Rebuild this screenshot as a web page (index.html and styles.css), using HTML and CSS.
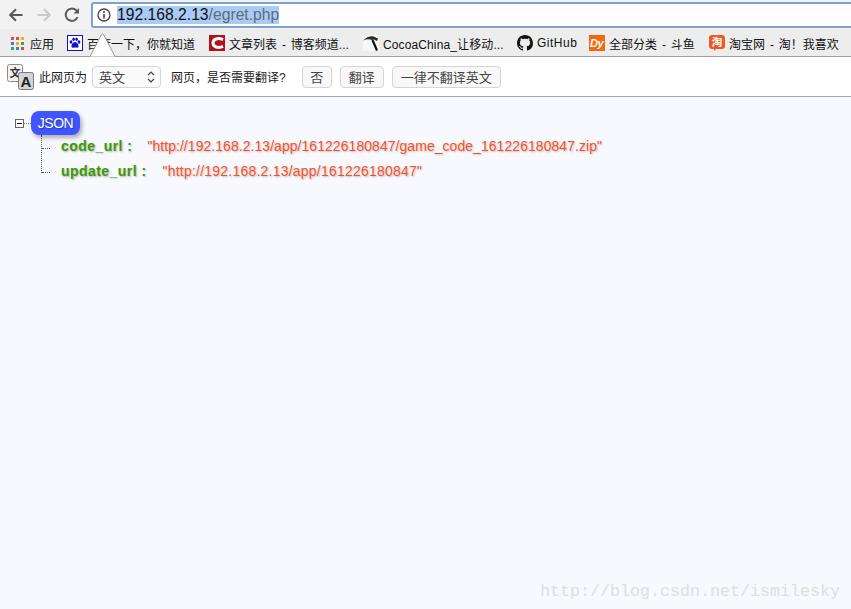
FILE: index.html
```html
<!DOCTYPE html>
<html lang="zh">
<head>
<meta charset="utf-8">
<title>egret.php</title>
<link rel="stylesheet" href="styles.css">
</head>
<body>
<header class="chrome">
  <div class="toolbar">
    <svg class="nav" width="16" height="16" viewBox="0 0 16 16"><path d="M14.5 8H2.5M8 2.2L2.2 8L8 13.8" fill="none" stroke="#5a5a5a" stroke-width="2"/></svg>
    <svg class="nav" width="16" height="16" viewBox="0 0 16 16"><path d="M1.5 8H13.5M8 2.2L13.8 8L8 13.8" fill="none" stroke="#c9c9c9" stroke-width="2"/></svg>
    <svg class="nav" width="16" height="16" viewBox="0 0 16 16"><path d="M13.6 10.2A6.2 6.2 0 1 1 12.6 3.6L14 5" fill="none" stroke="#5a5a5a" stroke-width="2"/><path d="M15 1V6.5H9.5Z" fill="#5a5a5a"/></svg>
    <div class="omnibox">
      <svg class="info" width="14" height="14" viewBox="0 0 14 14"><circle cx="7" cy="7" r="6" fill="none" stroke="#444" stroke-width="1.3"/><path d="M7 6V10.5" stroke="#444" stroke-width="1.6"/><circle cx="7" cy="3.9" r="1" fill="#444"/></svg>
      <span class="url"><span class="host">192.168.2.13</span>/egret.php</span>
    </div>
  </div>
  <nav class="bookmarks">
    <a class="mark m-apps"><svg width="13" height="13" viewBox="0 0 13 13"><rect x="0" y="0" width="3" height="3" fill="#e04a3a"/><rect x="5" y="0" width="3" height="3" fill="#e04a3a"/><rect x="10" y="0" width="3" height="3" fill="#f4b400"/><rect x="0" y="5" width="3" height="3" fill="#3a7de0"/><rect x="5" y="5" width="3" height="3" fill="#f4b400"/><rect x="10" y="5" width="3" height="3" fill="#34a853"/><rect x="0" y="10" width="3" height="3" fill="#34a853"/><rect x="5" y="10" width="3" height="3" fill="#3a7de0"/><rect x="10" y="10" width="3" height="3" fill="#e04a3a"/></svg>应用</a>
    <a class="mark m-baidu"><svg width="16" height="16" viewBox="0 0 16 16"><rect x=".5" y=".5" width="15" height="15" fill="#fff" stroke="#1111cc"/><g fill="#1111cc"><ellipse cx="4" cy="7" rx="1.4" ry="1.8"/><ellipse cx="6.6" cy="4.2" rx="1.3" ry="1.8"/><ellipse cx="9.6" cy="4.2" rx="1.3" ry="1.8"/><ellipse cx="12" cy="7" rx="1.4" ry="1.8"/><path d="M8 7C6 7 4 10 4.5 11.8C5 13.2 7 12.6 8 12.6C9 12.6 11 13.2 11.5 11.8C12 10 10 7 8 7Z"/></g></svg>百度一下，你就知道</a>
    <a class="mark m-csdn"><svg width="16" height="16" viewBox="0 0 16 16"><rect width="16" height="16" fill="#b3111c"/><path d="M14 4.6C9 2.4 4 4 4 8C4 12 9 13.6 14 11.4" fill="none" stroke="#fff" stroke-width="3"/></svg>文章列表 - 博客频道...</a>
    <a class="mark m-cocoa"><svg width="16" height="16" viewBox="0 0 16 16"><rect width="16" height="16" fill="#f7f7f7"/><path d="M0 5.5C3 2.5 6 1 10 1.2L15 3.5L14 6L11 4.5L9 5C6 3.6 3 4 0 5.5Z" fill="#2b2b2b"/><path d="M9.5 5L14 15.5" stroke="#111" stroke-width="2.2"/></svg>CocoaChina_让移动...</a>
    <a class="mark m-github"><svg width="16" height="16" viewBox="0 0 16 16"><path d="M8 0C3.58 0 0 3.58 0 8c0 3.54 2.29 6.53 5.47 7.59.4.07.55-.17.55-.38 0-.19-.01-.82-.01-1.49-2.01.37-2.53-.49-2.69-.94-.09-.23-.48-.94-.82-1.13-.28-.15-.68-.52-.01-.53.63-.01 1.08.58 1.23.82.72 1.21 1.87.87 2.33.66.07-.52.28-.87.51-1.07-1.78-.2-3.64-.89-3.64-3.95 0-.87.31-1.59.82-2.15-.08-.2-.36-1.02.08-2.12 0 0 .67-.21 2.2.82.64-.18 1.32-.27 2-.27s1.36.09 2 .27c1.53-1.04 2.2-.82 2.2-.82.44 1.1.16 1.92.08 2.12.51.56.82 1.27.82 2.15 0 3.07-1.87 3.75-3.65 3.95.29.25.54.73.54 1.48 0 1.07-.01 1.93-.01 2.2 0 .21.15.46.55.38A8.01 8.01 0 0 0 16 8c0-4.42-3.58-8-8-8Z" fill="#111"/></svg>GitHub</a>
    <a class="mark m-douyu"><svg width="16" height="16" viewBox="0 0 16 16"><rect width="16" height="16" fill="#f26a0f"/><text class="dy" x="1" y="12">Dy</text></svg>全部分类 - 斗鱼</a>
    <a class="mark m-taobao"><svg width="16" height="16" viewBox="0 0 16 16"><path d="M3 0H13Q16 0 16 3V11Q16 14 13 14H7L5 16V14H3Q0 14 0 11V3Q0 0 3 0Z" fill="#ee5a24"/><text class="tao" x="8" y="11">淘</text></svg>淘宝网 - 淘！我喜欢</a>
  </nav>
  <div class="infobar">
    <svg class="translate" width="28" height="28" viewBox="0 0 28 28"><rect x=".5" y=".5" width="15" height="17" rx="2" fill="#f4f4f4" stroke="#8a8a8a"/><text class="zh-glyph" x="8" y="13">文</text><rect x="11.5" y="8.5" width="15" height="17" rx="2" fill="#d4d4d4" stroke="#7a7a7a"/><text class="a-glyph" x="19" y="22.5">A</text></svg>
    <span class="msg msg-a">此网页为</span>
    <span class="select">英文<svg width="8" height="14" viewBox="0 0 8 14"><path d="M1 5L4 2L7 5M1 9L4 12L7 9" fill="none" stroke="#444" stroke-width="1.2"/></svg></span>
    <span class="msg msg-b">网页，是否需要翻译?</span>
    <button class="btn btn-no">否</button>
    <button class="btn btn-yes">翻译</button>
    <button class="btn">一律不翻译英文</button>
  </div>
  <svg class="notch" width="30" height="24" viewBox="0 0 30 24"><path d="M2 23.5L13.5 1.5Q14.5 .3 15.5 1.5L27 23.5Z" fill="#fff"/><path d="M0 23.5H2L13.5 1.5Q14.5 .3 15.5 1.5L27 23.5H30" fill="none" stroke="#9a9a9a"/></svg>
</header>
<main class="page">
  <div class="root">
    <span class="toggle"></span><span class="dots-h"></span><span class="badge">JSON</span>
  </div>
  <ul class="tree">
    <li class="row"><span class="key">code_url :</span><span class="val">"http://192.168.2.13/app/161226180847/game_code_161226180847.zip"</span></li>
    <li class="row"><span class="key">update_url :</span><span class="val">"http://192.168.2.13/app/161226180847"</span></li>
  </ul>
  <div class="watermark">http://blog.csdn.net/ismilesky</div>
</main>
</body>
</html>
```
FILE: styles.css
```css
* { box-sizing: border-box; }
html, body { margin: 0; height: 100%; }
body {
  width: 851px;
  height: 609px;
  overflow: hidden;
  display: flex;
  flex-direction: column;
  font-family: "Liberation Sans", "Noto Sans CJK SC", sans-serif;
  background: #f8f8ff;
}
.chrome { position: relative; flex: none; }
.toolbar {
  height: 29px;
  background: #f2f2f2;
  display: flex;
  align-items: center;
  padding-left: 8px;
  gap: 12px;
}
.nav { flex: none; }
.omnibox {
  margin: 1px 0 0 -1px;
  flex: 1;
  height: 26px;
  background: #fff;
  border: 2px solid #7da2ce;
  border-right: 0;
  border-radius: 3px 0 0 3px;
  display: flex;
  align-items: center;
  padding-left: 4px;
  gap: 6px;
}
.url { font-size: 15.7px; color: #5f6b7a; background: #a9cbf5; line-height: 18px; }
.host { color: #111; }
.bookmarks {
  height: 28px;
  padding: 1px 0 0 11px;
  background: #ededed;
  border-bottom: 1px solid #9d9d9d;
  display: flex;
  align-items: center;
  font-size: 12px;
  color: #111;
  white-space: nowrap;
  word-spacing: 1.6px;
}
.mark { display: flex; align-items: center; gap: 4px; }
.m-apps { gap: 6px; width: 56px; }
.m-baidu { width: 142px; }
.m-csdn { width: 154px; }
.m-cocoa { width: 154px; letter-spacing: .12px; }
.m-github { width: 72px; letter-spacing: .5px; }
.m-douyu { width: 120px; }
.dy { font: italic bold 11px "Liberation Sans", sans-serif; fill: #fff; letter-spacing: -.5px; }
.tao { font: bold 10.5px "Noto Sans CJK SC", sans-serif; fill: #fff; text-anchor: middle; }
.infobar {
  height: 40px;
  background: #fff;
  border-bottom: 1px solid #a6a6a6;
  display: flex;
  align-items: center;
  padding: 0 0 0 6px;
  font-size: 12px;
  color: #222;
}
.translate { flex: none; margin: 3px 0 0 1px; }
.zh-glyph { font: bold 11px "Noto Sans CJK SC", sans-serif; fill: #333; text-anchor: middle; }
.a-glyph { font: bold 15px "Liberation Sans", sans-serif; fill: #222; text-anchor: middle; }
.msg-a { margin-left: 4px; }
.select {
  margin-left: 5px;
  width: 69px;
  height: 22px;
  border: 1px solid #d6d6d6;
  border-radius: 4px;
  background: #fafafa;
  padding: 0 5px 0 6px;
  display: flex;
  align-items: center;
  justify-content: space-between;
  font-size: 13px;
  color: #444;
}
.msg-b { margin-left: 10px; }
.btn {
  margin-left: 8px;
  height: 22px;
  padding: 0 8px;
  border: 1px solid #d6d6d6;
  border-radius: 4px;
  background: #f8f8f8;
  font: 13px "Liberation Sans", "Noto Sans CJK SC", sans-serif;
  color: #444;
}
.btn-no { margin-left: 16px; width: 30px; padding: 0; }
.notch { position: absolute; left: 88px; top: 33px; }
.page { position: relative; flex: 1; padding: 14px 0 0 15px; }
.root { display: flex; align-items: center; height: 24px; }
.toggle {
  width: 9px;
  height: 9px;
  border: 1px solid #666;
  background: linear-gradient(#111, #111) center / 5px 1px no-repeat #fff;
}
.dots-h { width: 7px; border-top: 1px dotted #777; }
.badge {
  width: 49px;
  height: 24px;
  border-radius: 8px;
  background: #3f55ff;
  color: #fff;
  font-size: 14px;
  line-height: 24px;
  text-align: center;
  letter-spacing: -0.5px;
  text-shadow: 1px 1px 2px rgba(0, 0, 0, .35);
  box-shadow: 2px 3px 4px rgba(0, 0, 0, .3);
}
.tree {
  list-style: none;
  margin: 0 0 0 26px;
  padding: 0;
  border-left: 1px dotted #555;
  height: 38px;
}
.row {
  display: flex;
  align-items: flex-start;
  height: 25px;
  line-height: 23px;
  padding-left: 19px;
  position: relative;
  font-size: 14px;
  white-space: nowrap;
}
.row::before {
  content: "";
  position: absolute;
  left: 0;
  top: 13px;
  width: 8px;
  border-top: 1px dotted #555;
}
.row + .row::before { top: 12px; }
.key {
  color: #3a9a00;
  font-weight: bold;
  letter-spacing: .45px;
  margin-right: 15px;
  text-shadow: 1px 1px 2px rgba(0, 0, 0, .3);
}
.val { color: #f9521e; letter-spacing: .05px; text-shadow: 1px 1px 2px rgba(0, 0, 0, .25); }
.row + .row .key { margin-right: 16px; }
.row + .row .val { letter-spacing: .22px; }
.watermark {
  position: absolute;
  right: 11px;
  bottom: 8px;
  font: 16.67px "Liberation Mono", monospace;
  color: #dedede;
}
```
